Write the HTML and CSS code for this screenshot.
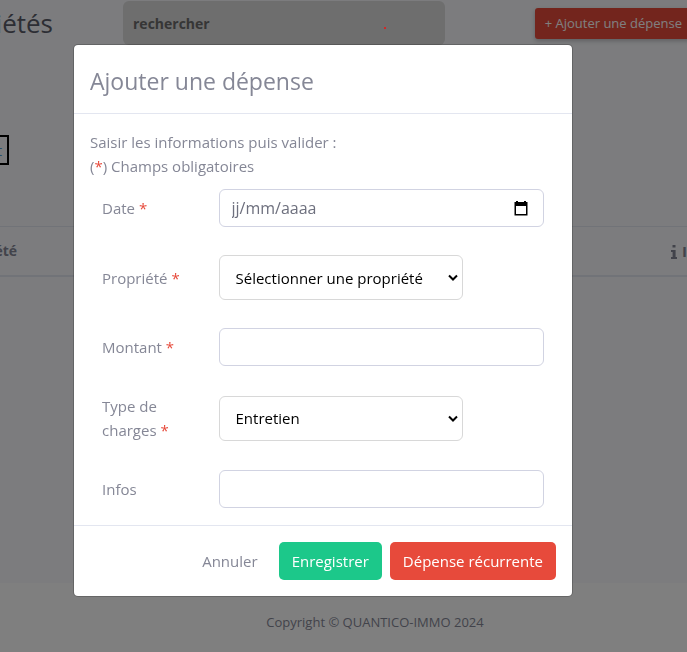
FILE: index.html
```html
<!DOCTYPE html>
<html lang="fr">
<head>
<meta charset="utf-8">
<meta name="viewport" content="width=device-width, initial-scale=1">
<title>Ajouter une dépense</title>
<link rel="stylesheet" href="styles.css">
</head>
<body>
<div class="page">
  <main class="content">
    <header class="topbar">
      <h1 class="page-title">iétés</h1>
      <input class="search" type="search" placeholder="rechercher" aria-label="rechercher">
      <button class="add-button" type="button">+ Ajouter une dépense</button>
    </header>
    <button class="filter" type="button">t</button>
    <table class="expenses">
      <thead>
        <tr>
          <th class="col-property"><span>été</span></th>
          <th class="col-info"><svg class="info-icon" viewBox="0 0 8 16" aria-hidden="true"><path d="M2.5 1h3v2.6h-3zM1 6h4.600v7H7v2H1v-2h1.600V8H1z"/></svg>I</th>
        </tr>
      </thead>
    </table>
  </main>
  <footer class="page-footer">Copyright © QUANTICO-IMMO 2024</footer>
</div>

<div class="backdrop">
  <form class="modal" role="dialog" aria-labelledby="modal-title">
    <div class="modal-header">
      <h2 class="modal-title" id="modal-title">Ajouter une dépense</h2>
    </div>
    <div class="modal-body">
      <p class="intro">Saisir les informations puis valider :<br>(<span class="required">*</span>) Champs obligatoires</p>
      <div class="fields">
        <div class="field">
          <label for="date">Date <span class="required">*</span></label>
          <div class="date-box control">
            <input class="date-input" id="date" type="text" placeholder="jj/mm/aaaa">
            <button class="date-button" type="button" aria-label="Calendrier">
              <svg class="calendar-icon" viewBox="0 0 14 15" aria-hidden="true"><path d="M2 0h2v1h6V0h2v1h1.500v13.500H.5V1H2zM2 5v8h10V5z" fill-rule="evenodd"/></svg>
            </button>
          </div>
        </div>
        <div class="field">
          <label for="property">Propriété <span class="required">*</span></label>
          <div class="select-box">
            <select id="property"><option>Sélectionner une propriété</option></select>
            <svg class="chevron" viewBox="0 0 10 7" aria-hidden="true"><path d="M1 1.500l4 4 4-4"/></svg>
          </div>
        </div>
        <div class="field">
          <label for="amount">Montant <span class="required">*</span></label>
          <input class="control" id="amount" type="text">
        </div>
        <div class="field">
          <label for="kind">Type de charges <span class="required">*</span></label>
          <div class="select-box">
            <select id="kind"><option>Entretien</option></select>
            <svg class="chevron" viewBox="0 0 10 7" aria-hidden="true"><path d="M1 1.500l4 4 4-4"/></svg>
          </div>
        </div>
        <div class="field">
          <label for="infos">Infos</label>
          <input class="control" id="infos" type="text">
        </div>
      </div>
    </div>
    <div class="modal-footer">
      <button class="btn btn-link" type="button">Annuler</button>
      <button class="btn btn-save" type="submit">Enregistrer</button>
      <button class="btn btn-recurring" type="button">Dépense récurrente</button>
    </div>
  </form>
  <span class="marker"></span>
</div>
</body>
</html>
```
FILE: styles.css
```css
* { box-sizing: border-box; }

body {
  margin: 0;
  background: #f8f9fc;
  color: #858796;
  font-family: "Open Sans", "Noto Sans", sans-serif;
  font-size: 15px;
  line-height: 24px;
}

h1, h2, p { margin: 0; font-weight: 400; }
button, input, select { font: inherit; color: inherit; margin: 0; }

.page {
  min-height: 100vh;
  display: flex;
  flex-direction: column;
  overflow: hidden;
}

.content { flex: 1; }

.topbar {
  display: flex;
  align-items: center;
  height: 46px;
}

.page-title {
  width: 53px;
  display: flex;
  justify-content: flex-end;
  overflow: hidden;
  color: #5a5c69;
  font-size: 26px;
  line-height: 40px;
}

.search {
  flex: 0 1 322px;
  margin: 0 auto 0 70px;
  min-width: 0;
  height: 44px;
  padding: 0 10px;
  border: 0;
  border-radius: 6px;
  background: #dcdcdc;
  font-size: 14px;
  font-weight: 700;
}
.search::placeholder { color: #6c6c6c; opacity: 1; }

.add-button {
  flex: none;
  height: 31px;
  margin-right: -5px;
  padding: 0 10px;
  border: 0;
  border-radius: 3px;
  background: #e74a3b;
  box-shadow: 0 2px 4px rgba(58, 59, 69, 0.3);
  color: #fff;
  font-size: 13px;
}

.filter {
  display: flex;
  align-items: center;
  justify-content: flex-end;
  width: 9px;
  height: 30px;
  margin-top: 89px;
  padding: 0 5px 0 0;
  overflow: hidden;
  border: 2px solid #000;
  border-left: 0;
  background: transparent;
  color: #4e9fd8;
}

.expenses {
  width: 100%;
  margin-top: 61px;
  border-collapse: separate;
  border-spacing: 0;
}
.expenses th {
  height: 51px;
  padding: 0;
  border-top: 1px solid #e3e6f0;
  border-bottom: 2px solid #e3e6f0;
  text-align: left;
}
.col-property span {
  display: flex;
  justify-content: flex-end;
  width: 17px;
  overflow: hidden;
  font-size: 14px;
}
.col-info { width: 16px; white-space: nowrap; }
.info-icon {
  width: 8px;
  height: 16px;
  margin-right: 4px;
  vertical-align: -3px;
  fill: #858796;
}

.page-footer {
  padding: 27px 0 18px 63px;
  background: #fff;
  font-size: 13px;
  text-align: center;
}

.backdrop {
  position: fixed;
  inset: 0;
  padding: 44px 114px 0 73px;
  overflow: auto;
  background: rgba(0, 0, 0, 0.5);
}

.marker {
  position: absolute;
  left: 384px;
  top: 27px;
  width: 2px;
  height: 2px;
  border-radius: 1px;
  background: #f01010;
}

.modal {
  max-width: 500px;
  margin: 0 auto;
  border: 1px solid rgba(0, 0, 0, 0.2);
  border-radius: 5px;
  background: #fff;
  background-clip: padding-box;
}

.modal-header {
  padding: 18px 16px 14px;
  border-bottom: 1px solid #e3e6f0;
}
.modal-title { font-size: 23px; line-height: 36px; }

.modal-body { padding: 16px 16px 17px; }
.intro { margin-bottom: 11px; }
.required { color: #e74a3b; }

.fields { display: grid; gap: 28px; }
.field {
  display: grid;
  grid-template-columns: 1fr 3fr;
  align-items: center;
}
.field label { padding: 0 12px; }
.field > .control, .select-box { margin: 0 12px; }

.control {
  min-width: 0;
  height: 38px;
  padding: 0 12px;
  border: 1px solid #d1d3e2;
  border-radius: 6px;
  background: #fff;
}

.date-box { display: flex; align-items: center; }
.date-input {
  flex: 1;
  min-width: 0;
  padding: 0;
  border: 0;
  outline: 0;
  background: none;
  font-size: 16px;
}
.date-input::placeholder { color: #6e707e; opacity: 1; }
.date-button {
  display: flex;
  padding: 3px;
  border: 0;
  background: none;
}
.calendar-icon { width: 14px; height: 15px; fill: #000; }

.select-box {
  position: relative;
  justify-self: start;
  width: 244px;
}
.select-box select {
  appearance: none;
  display: block;
  width: 100%;
  height: 45px;
  padding: 0 16px;
  border: 1px solid #d8d8d8;
  border-radius: 6px;
  background: #fff;
  color: #000;
}
.chevron {
  position: absolute;
  top: 19px;
  right: 5px;
  width: 10px;
  height: 7px;
  fill: none;
  stroke: #000;
  stroke-width: 2;
  pointer-events: none;
}

.modal-footer {
  display: flex;
  justify-content: flex-end;
  gap: 8px;
  padding: 16px;
  border-top: 1px solid #e3e6f0;
}
.btn {
  height: 38px;
  padding: 0 13px;
  border: 0;
  border-radius: 5px;
  color: #fff;
  white-space: nowrap;
}
.btn-link { background: none; color: #858796; }
.btn-save { background: #1cc88a; }
.btn-recurring { background: #e74a3b; }
```
